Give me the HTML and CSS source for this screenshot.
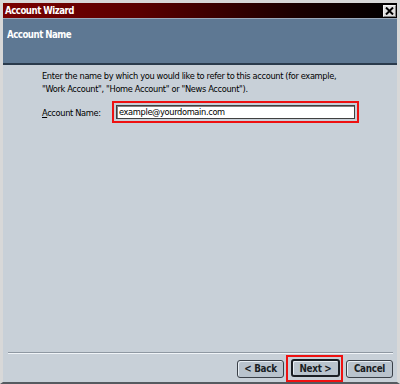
FILE: index.html
```html
<!DOCTYPE html>
<html>
<head>
<meta charset="utf-8">
<link rel="stylesheet" href="styles.css">
</head>
<body>
<div class="window">
  <div class="titlebar">
    <span class="title">Account Wizard</span>
    <span class="close">
      <svg width="9" height="8" viewBox="0 0 9 8"><path d="M1 0.5 L8 7.5 M8 0.5 L1 7.5" stroke="#000" stroke-width="2"/></svg>
    </span>
  </div>
  <div class="header">
    <div class="header-title">Account Name</div>
  </div>
  <div class="content">
    <p class="desc">Enter the name by which you would like to refer to this account (for example,<br>"Work Account", "Home Account" or "News Account").</p>
    <div class="field-row">
      <label class="label"><u>A</u>ccount Name:</label>
      <div class="highlight">
        <div class="input">example@yourdomain.com</div>
      </div>
    </div>
  </div>
  <div class="footer">
    <div class="separator"></div>
    <div class="buttons">
      <button class="btn">&lt; Back</button>
      <div class="highlight-btn"><button class="btn btn-default">Next &gt;</button></div>
      <button class="btn">Cancel</button>
    </div>
  </div>
</div>
</body>
</html>
```
FILE: styles.css
```css
html, body {
  margin: 0;
  padding: 0;
  background: #d6d6d6;
}
.window {
  width: 400px;
  height: 384px;
  box-sizing: border-box;
  border-left: 3px solid #d8d8d8;
  border-right: 3px solid #d8d8d8;
  border-top: 3px solid #d8d8d8;
  border-bottom: 2px solid #555a60;
  background: #c8d0d8;
  display: flex;
  flex-direction: column;
  font-family: "DejaVu Sans Condensed", "Liberation Sans", sans-serif;
  font-size: 9.2px;
  letter-spacing: -0.35px;
  color: #000;
}
.titlebar {
  height: 15px;
  background: linear-gradient(to right, #7a0000 0%, #5a0000 35%, #1a0000 75%, #000 100%);
  display: flex;
  align-items: center;
  justify-content: space-between;
  padding: 0 1px 0 2px;
}
.title {
  color: #fff;
  font-weight: bold;
  font-size: 9.6px;
  letter-spacing: -0.5px;
}
.close {
  width: 13px;
  height: 12px;
  background: #e0e0e0;
  box-sizing: border-box;
  border: 1px solid #f4f4f4;
  border-right-color: #808080;
  border-bottom-color: #808080;
  display: flex;
  align-items: center;
  justify-content: center;
}
.header {
  height: 34px;
  background: #5e7893;
  border-top: 1px solid #9aaabb;
  border-bottom: 2px solid #2a3a4c;
  padding: 10px 0 0 4px;
}
.header-title {
  color: #fff;
  font-weight: bold;
  font-size: 9.6px;
  letter-spacing: -0.5px;
}
.content {
  flex: 1;
  padding: 4px 0 0 39px;
}
.desc {
  margin: 0;
  line-height: 13px;
  white-space: nowrap;
}
.field-row {
  display: flex;
  align-items: center;
  margin-top: 6px;
}
.label {
  width: 70px;
  white-space: nowrap;
}
.highlight {
  border: 2px solid #ee1111;
  padding: 2px;
}
.input {
  width: 233px;
  height: 12px;
  background: #fff;
  border: 1px solid #404040;
  box-shadow: inset 1px 1px 0 #808080;
  padding: 0 2px;
  line-height: 12px;
  white-space: nowrap;
}
.footer {
  padding: 0 4px 0 5px;
}
.separator {
  height: 1px;
  background: #8f98a2;
  border-bottom: 1px solid #f0f4f8;
}
.buttons {
  display: flex;
  justify-content: flex-end;
  align-items: center;
  margin-top: 1px;
  height: 27px;
}
.btn {
  width: 47px;
  height: 18px;
  background: #b9c3cd;
  border: 1px solid #3a4048;
  border-radius: 3px;
  box-shadow: inset 1px 1px 0 #e8eef4;
  font-family: "DejaVu Sans Condensed", "Liberation Sans", sans-serif;
  font-size: 9.8px;
  font-weight: bold;
  letter-spacing: -0.3px;
  color: #1a1e24;
  padding: 0;
  margin: 0;
}
.btn-default {
  width: 49px;
  border: 2px solid #1a1e24;
}
.highlight-btn {
  border: 2px solid #ee1111;
  padding: 2px 1px 3px 3px;
  margin: 0 3px 0 2px;
}
```
